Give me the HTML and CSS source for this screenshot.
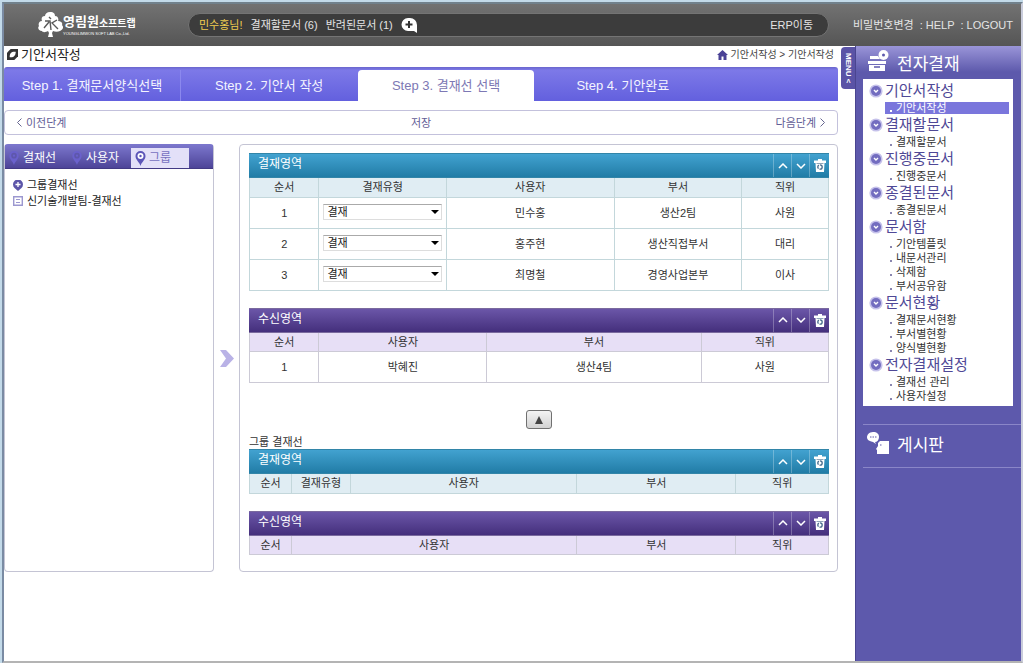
FILE: index.html
```html
<!DOCTYPE html>
<html lang="ko">
<head>
<meta charset="utf-8">
<title>기안서작성</title>
<link rel="stylesheet" href="styles.css">
</head>
<body>
<svg class="defs" aria-hidden="true">
  <symbol id="up" viewBox="0 0 10 6"><path d="M1 5l4-4 4 4" fill="none" stroke="#fff" stroke-width="1.5"/></symbol>
  <symbol id="down" viewBox="0 0 10 6"><path d="M1 1l4 4 4-4" fill="none" stroke="#fff" stroke-width="1.5"/></symbol>
  <symbol id="bin" viewBox="0 0 12 13"><path d="M4 0h4v1.500h4V4h-1.500L10 13H2L1.500 4H0V1.500h4z" fill="#fff"/><circle cx="6" cy="8" r="2.200" fill="none" stroke="#456a8c" stroke-width="1.300" stroke-dasharray="3.600 1"/><path d="M2.500 4.500h7" stroke="#456a8c" stroke-width=".6"/></symbol>
  <symbol id="bullet" viewBox="0 0 14 14"><circle cx="7" cy="7" r="6.600" fill="#c5c1ea"/><circle cx="7" cy="7" r="5" fill="#736dc0"/><path d="M5 6l2 2 2-2" fill="none" stroke="#fff" stroke-width="1.400"/></symbol>
  <symbol id="pin" viewBox="0 0 10 15"><path d="M5 15C4 11 0 9 0 5a5 5 0 0 1 10 0c0 4-4 6-5 10z" fill="currentColor"/><circle cx="5" cy="5" r="3" fill="var(--hole)"/><circle cx="5" cy="5" r="1.200" fill="currentColor"/></symbol>
</svg>
<div class="window">
  <header class="top">
    <a class="logo" href="#">
      <svg class="tree" viewBox="0 0 25 26" aria-hidden="true"><path d="M12 0c4 0 5 2 5 4 3 0 4 3 3 5 3 0 5 2 4 4 2 2 1 5-2 6-2 1-5 1-7 0l-1 2 1 4h-5l1-4-1-2c-2 1-5 2-6 0-3 0-5-3-3-5-1-2 0-5 3-5-1-3 0-5 3-5 0-2 2-4 5-4z" fill="#fff"/><path d="M11 5l2 2M7 9h5l1 9M11 10l-5 6M19 8l-5 3 6 6" fill="none" stroke="#5a5a5a" stroke-width="1.400"/></svg>
      <span class="brand"><span class="brand-name"><b class="brand-big">영림원</b><b class="brand-small">소프트랩</b></span><span class="brand-sub">YOUNGLIMWON SOFT LAB Co.,Ltd.</span></span>
    </a>
    <div class="status">
      <span class="user">민수홍님!</span>
      <a href="#">결재할문서 (6)</a>
      <a href="#">반려된문서 (1)</a>
      <button class="plain" type="button" aria-label="추가"><svg width="16" height="15" viewBox="0 0 16 15"><path d="M7 0h2a7 7 0 0 1 7 7v8l-3-2H7A6.500 6.500 0 0 1 7 0z" fill="#fff"/><path d="M8 3v7M4.500 6.500h7" stroke="#333" stroke-width="2"/></svg></button>
      <a class="erp" href="#">ERP이동</a>
    </div>
    <nav class="util"><a href="#">비밀번호변경</a><a href="#">: HELP</a><a href="#">: LOGOUT</a></nav>
  </header>
  <div class="body">
    <main class="main">
      <div class="title-row">
        <h1><svg width="11" height="11" viewBox="0 0 12 12" aria-hidden="true"><path d="M4 0h8v8l-4 4H0V4z" fill="#333"/><path d="M3 9C2.500 4.500 5 2.500 9.500 3 9.500 7 7.500 9.500 3 9z" fill="#fff"/></svg>기안서작성</h1>
        <p class="crumb"><svg width="11" height="10" viewBox="0 0 11 10" aria-hidden="true"><path d="M5.500 0L11 5H9.500v5h-3V6.500h-2V10h-3V5H0z" fill="#4a4296"/></svg>기안서작성 &gt; 기안서작성</p>
      </div>
      <nav class="steps">
        <a href="#">Step 1. 결재문서양식선택</a><a href="#">Step 2. 기안서 작성</a><a class="on" href="#">Step 3. 결재선 선택</a><a href="#">Step 4. 기안완료</a>
      </nav>
      <div class="pager">
        <button class="plain" type="button"><svg width="5" height="9" viewBox="0 0 5 9"><path d="M4.500.5l-4 4 4 4" fill="none" stroke="#666690"/></svg>이전단계</button>
        <button class="plain" type="button">저장</button>
        <button class="plain" type="button">다음단계<svg width="5" height="9" viewBox="0 0 5 9"><path d="M.5.5l4 4-4 4" fill="none" stroke="#666690"/></svg></button>
      </div>
      <div class="columns">
        <section class="tree-panel">
          <div class="tabs">
            <button class="tab" type="button"><svg width="10" height="14"><use href="#pin"/></svg>결재선</button>
            <button class="tab" type="button"><svg width="10" height="14"><use href="#pin"/></svg>사용자</button>
            <button class="tab on" type="button"><svg width="11" height="15"><use href="#pin"/></svg>그룹</button>
          </div>
          <ul class="tree-list">
            <li><svg width="10" height="11" viewBox="0 0 10 11"><path d="M5 11L1.500 8a5 5 0 1 1 7 0z" fill="#5c55a8"/><path d="M5 2v5M2.500 4.500h5" stroke="#fff" stroke-width="1.300"/></svg>그룹결재선</li>
            <li><svg width="10" height="10" viewBox="0 0 10 10"><path d="M.7.7h8.600v8.600H.7z" fill="#fff" stroke="#9c98d0" stroke-width="1.400"/><path d="M3 3.500h4M3 6.500h4" stroke="#9c98d0"/></svg>신기술개발팀-결재선</li>
          </ul>
        </section>
        <div class="move"><svg width="14" height="17" viewBox="0 0 14 17" aria-hidden="true"><path d="M0 0h6l8 8.500L6 17H0l6-8.500z" fill="#b9b2e6"/></svg></div>
        <section class="lines">
          <div class="box blue">
            <div class="bar"><h2>결재영역</h2><button type="button" aria-label="위로"><svg width="10" height="6"><use href="#up"/></svg></button><button type="button" aria-label="아래로"><svg width="10" height="6"><use href="#down"/></svg></button><button type="button" aria-label="삭제"><svg width="12" height="13"><use href="#bin"/></svg></button></div>
            <table>
              <colgroup><col class="w12"><col class="w22"><col class="w29"><col class="w22"><col class="w15"></colgroup>
              <thead><tr><th>순서</th><th>결재유형</th><th>사용자</th><th>부서</th><th>직위</th></tr></thead>
              <tbody>
                <tr><td>1</td><td><label class="pick"><select aria-label="결재유형 1"><option>결재</option></select><svg width="8" height="4" viewBox="0 0 8 4"><path d="M0 0h8L4 4z"/></svg></label></td><td>민수홍</td><td>생산2팀</td><td>사원</td></tr>
                <tr><td>2</td><td><label class="pick"><select aria-label="결재유형 2"><option>결재</option></select><svg width="8" height="4" viewBox="0 0 8 4"><path d="M0 0h8L4 4z"/></svg></label></td><td>홍주현</td><td>생산직접부서</td><td>대리</td></tr>
                <tr><td>3</td><td><label class="pick"><select aria-label="결재유형 3"><option>결재</option></select><svg width="8" height="4" viewBox="0 0 8 4"><path d="M0 0h8L4 4z"/></svg></label></td><td>최명철</td><td>경영사업본부</td><td>이사</td></tr>
              </tbody>
            </table>
          </div>
          <div class="box violet">
            <div class="bar"><h2>수신영역</h2><button type="button" aria-label="위로"><svg width="10" height="6"><use href="#up"/></svg></button><button type="button" aria-label="아래로"><svg width="10" height="6"><use href="#down"/></svg></button><button type="button" aria-label="삭제"><svg width="12" height="13"><use href="#bin"/></svg></button></div>
            <table>
              <colgroup><col class="w12"><col class="w29"><col class="w37"><col class="w22"></colgroup>
              <thead><tr><th>순서</th><th>사용자</th><th>부서</th><th>직위</th></tr></thead>
              <tbody><tr><td>1</td><td>박혜진</td><td>생산4팀</td><td>사원</td></tr></tbody>
            </table>
          </div>
          <button class="raise" type="button" aria-label="위로 적용"><svg width="8" height="8" viewBox="0 0 8 8"><path d="M4 0l4 8H0z" fill="#444"/></svg></button>
          <h3>그룹 결재선</h3>
          <div class="box blue">
            <div class="bar"><h2>결재영역</h2><button type="button" aria-label="위로"><svg width="10" height="6"><use href="#up"/></svg></button><button type="button" aria-label="아래로"><svg width="10" height="6"><use href="#down"/></svg></button><button type="button" aria-label="삭제"><svg width="12" height="13"><use href="#bin"/></svg></button></div>
            <table>
              <colgroup><col class="order"><col class="kind"><col><col class="dept"><col class="w16"></colgroup>
              <thead><tr><th>순서</th><th>결재유형</th><th>사용자</th><th>부서</th><th>직위</th></tr></thead>
            </table>
          </div>
          <div class="box violet">
            <div class="bar"><h2>수신영역</h2><button type="button" aria-label="위로"><svg width="10" height="6"><use href="#up"/></svg></button><button type="button" aria-label="아래로"><svg width="10" height="6"><use href="#down"/></svg></button><button type="button" aria-label="삭제"><svg width="12" height="13"><use href="#bin"/></svg></button></div>
            <table>
              <colgroup><col class="order"><col><col class="dept"><col class="w16"></colgroup>
              <thead><tr><th>순서</th><th>사용자</th><th>부서</th><th>직위</th></tr></thead>
            </table>
          </div>
        </section>
      </div>
    </main>
    <button class="menu-tab" type="button">MENU &lt;</button>
    <aside class="side">
      <h2 class="side-title"><svg width="21" height="22" viewBox="0 0 21 22" aria-hidden="true"><circle cx="15.500" cy="5" r="5" fill="#fff"/><circle cx="15.500" cy="5" r="1.500" fill="#5d59ac"/><path d="M2 6h8l2 3H2zM0 11h18v3H0zM1 15h16v6H1z" fill="#fff"/><path d="M6 17h6" stroke="#5d59ac" stroke-width="1.500"/></svg>전자결재</h2>
      <nav class="menu">
        <h3><svg width="14" height="14"><use href="#bullet"/></svg>기안서작성</h3>
        <ul><li class="on"><a href="#">기안서작성</a></li></ul>
        <h3><svg width="14" height="14"><use href="#bullet"/></svg>결재할문서</h3>
        <ul><li><a href="#">결재할문서</a></li></ul>
        <h3><svg width="14" height="14"><use href="#bullet"/></svg>진행중문서</h3>
        <ul><li><a href="#">진행중문서</a></li></ul>
        <h3><svg width="14" height="14"><use href="#bullet"/></svg>종결된문서</h3>
        <ul><li><a href="#">종결된문서</a></li></ul>
        <h3><svg width="14" height="14"><use href="#bullet"/></svg>문서함</h3>
        <ul><li><a href="#">기안템플릿</a></li><li><a href="#">내문서관리</a></li><li><a href="#">삭제함</a></li><li><a href="#">부서공유함</a></li></ul>
        <h3><svg width="14" height="14"><use href="#bullet"/></svg>문서현황</h3>
        <ul><li><a href="#">결재문서현황</a></li><li><a href="#">부서별현황</a></li><li><a href="#">양식별현황</a></li></ul>
        <h3><svg width="14" height="14"><use href="#bullet"/></svg>전자결재설정</h3>
        <ul><li><a href="#">결재선 관리</a></li><li><a href="#">사용자설정</a></li></ul>
      </nav>
      <h2 class="board"><svg width="23" height="23" viewBox="0 0 23 23" aria-hidden="true"><path d="M6 0c4 0 6 2 6 5s-2 5-4 5l1 2-3-2C1 9 0 7 0 5s2-5 6-5z" fill="#fff"/><path d="M3 5h1.500M5.500 5H7M8 5h1.500" stroke="#5d59ac"/><path d="M13 9h9v13H10v-4l-1-1 2-3v-3z" fill="#fff"/><path d="M13 13h1.500" stroke="#5d59ac"/></svg>게시판</h2>
    </aside>
  </div>
</div>
</body>
</html>
```
FILE: styles.css
```css
* { box-sizing: border-box; }
body, h1, h2, h3, p, ul { margin: 0; padding: 0; }
h1, h2, h3 { font-weight: 400; }
ul { list-style: none; }
body {
  font: 11px/14px "Liberation Sans", "Noto Sans CJK KR", sans-serif;
  color: #333;
  background: #c3dae9;
}
a { color: inherit; text-decoration: none; }
svg { flex: none; }
button { font: inherit; cursor: pointer; }
.plain { border: 0; padding: 0; background: none; color: inherit; display: flex; align-items: center; }
.defs { display: none; }
body { min-height: 100vh; padding: 2px 0 0 2px; display: flex; flex-direction: column; }
.window {
  flex: 1;
  display: flex;
  flex-direction: column;
  border-style: solid;
  border-width: 2px;
  border-color: #71818c #c9ccdb #b4b4b4 #7a8ba3;
  background: #fff;
}

.top {
  height: 42px;
  display: flex;
  align-items: center;
  color: #e4e4e4;
  background: linear-gradient(#727272, #555);
}
.logo { display: flex; align-items: center; gap: 0; width: 184px; padding-left: 34px; color: #fff; }
.tree { width: 25px; height: 26px; }
.brand { display: flex; flex-direction: column; }
.brand-name { display: flex; align-items: flex-end; }
.brand-big { font-size: 13px; line-height: 18px; }
.brand-small { font-size: 10px; line-height: 14px; }
.brand-sub { font-size: 4px; line-height: 6px; white-space: nowrap; }
.status {
  flex: 1;
  height: 24px;
  display: flex;
  align-items: center;
  gap: 8px;
  padding: 0 15px 0 10px;
  border: 1px solid #747474;
  border-radius: 12px;
  background: #3c3c3c;
}
.user { color: #f0cc50; }
.erp { margin-left: auto; }
.util { width: 192px; padding: 0 8px 0 24px; display: flex; justify-content: space-between; white-space: nowrap; }

.body { flex: 1; display: flex; }
.main { flex: 1; min-width: 0; padding-right: 3px; }
.title-row { height: 21px; padding: 0 4px 4px 3px; display: flex; align-items: center; justify-content: space-between; }
h1 { display: flex; align-items: center; gap: 3px; font-size: 13px; line-height: 16px; color: #222; }
.crumb { display: flex; align-items: center; gap: 3px; font-size: 10px; color: #444; }
.steps {
  display: flex;
  height: 34px;
  padding-top: 3px;
  border-radius: 3px 3px 0 0;
  background: linear-gradient(#6a66cc 0, #7d79e8 3px, #6360de);
}
.steps a {
  width: 21.2%;
  display: flex;
  align-items: center;
  justify-content: center;
  font-size: 13px;
  color: #f4f4ff;
  white-space: nowrap;
}
.steps a:first-child { border-right: 1px solid #8b88ee; }
.steps .on { color: #7d78b4; background: #fff; border-radius: 4px 4px 0 0; }
.pager {
  height: 25px;
  margin-top: 9px;
  padding: 0 12px;
  display: flex;
  align-items: center;
  justify-content: space-between;
  color: #625d96;
  border: 1px solid #c3c1dc;
  border-radius: 4px;
}
.pager button { gap: 4px; }

.columns { display: flex; margin-top: 9px; }
.tree-panel { width: 210px; border: 1px solid #c4c4d4; border-top-color: #7b76cc; border-radius: 4px; }
.tabs { display: flex; height: 24px; padding-top: 3px; background: linear-gradient(#7b76cc, #4d4498); border-bottom: 1px solid #423984; }
.tab {
  --hole: #5e57ac;
  width: 63px;
  display: flex;
  align-items: center;
  gap: 4px;
  padding: 0 0 0 4px;
  border: 0;
  background: none;
  color: #fff;
  font-size: 12px;
}
.tab svg { color: #6a61cc; }
.tab.on { --hole: #fff; width: 58px; gap: 3px; color: #7670c0; background: #e3e0f8; }
.tab.on svg { color: #5c55b8; }
.tree-list { padding: 8px 8px; line-height: 16px; color: #222; }
.tree-list li { display: flex; align-items: center; gap: 4px; }
.move { width: 25px; display: flex; align-items: center; justify-content: center; }
.lines { flex: 1; min-width: 0; padding: 8px 8px 16px 9px; border: 1px solid #c4c4d4; border-radius: 4px; display: flex; flex-direction: column; }
.box { margin-bottom: 17px; }
.box:last-child { margin-bottom: 0; }
.bar { display: flex; height: 25px; border: solid; border-width: 1px 0; color: #fff; }
.blue .bar { background: linear-gradient(#42a2d0, #217ca6); border-color: #3285a8 #17617f; }
.violet .bar { background: linear-gradient(#6b56a8, #442f7c); border-color: #7a6a9e #2d1d5c; }
.bar h2 { flex: 1; padding-left: 9px; font-size: 12px; line-height: 20px; }
.bar button { width: 18px; padding: 0; border: 0; border-left: 1px solid #ffffff44; background: none; display: flex; align-items: center; justify-content: center; }
.bar button:last-child { width: 20px; }
table { width: 100%; border-collapse: collapse; table-layout: fixed; }
th, td { padding: 0; text-align: center; font-weight: 400; border: 1px solid #c3d7db; }
th { height: 19px; border-top: 0; }
td { height: 31px; }
.blue th { background: #e0edf3; }
.violet th { background: #e7dff6; }
.violet th, .violet td { border-color: #cccad6; }
.order { width: 42px; } .kind { width: 59px; } .dept { width: 159px; }
.w12 { width: 12%; } .w15 { width: 15%; } .w16 { width: 16%; }
.w22 { width: 22%; } .w29 { width: 29%; } .w37 { width: 37%; }
.pick { display: grid; align-items: center; margin: 0 4px 2px; }
.pick select, .pick svg { grid-area: 1 / 1; }
.pick svg { justify-self: end; margin-right: 3px; pointer-events: none; }
select {
  appearance: none;
  width: 100%;
  height: 16px;
  padding: 0 3px;
  font: inherit;
  line-height: 14px;
  color: #222;
  background: #fff;
  border: 1px solid #ddd;
  border-top-color: #aaa;
  border-radius: 0;
}
.raise {
  align-self: center;
  width: 26px;
  height: 19px;
  margin: 10px 0 6px;
  padding: 0;
  display: flex;
  align-items: center;
  justify-content: center;
  border: 1px solid #707070;
  border-radius: 3px;
  background: linear-gradient(#f4f4f4, #d2d2d2);
}
.lines h3 { font-size: 11px; line-height: 14px; }

.menu-tab {
  width: 14px;
  height: 42px;
  margin-top: 1px;
  padding: 0;
  border: 0;
  border-radius: 4px 0 0 4px;
  writing-mode: vertical-rl;
  font-size: 8px;
  font-weight: 700;
  line-height: 14px;
  color: #fff;
  background: #5a53a6;
}
.side { width: 166px; border-left: 1px solid #4a4590; background: linear-gradient(#9a95d8, #5d59ac 26px); color: #fff; }
.side-title, .board { display: flex; align-items: center; gap: 8px; font-size: 17px; line-height: 24px; }
.side-title { height: 33px; padding: 4px 0 0 12px; }
.side-title svg { margin-bottom: 8px; }
.menu { margin: 0 8px 0 7px; padding: 2px 4px 3px 6px; background: #fff; color: #333; }
.menu h3 { display: flex; align-items: center; gap: 2px; font-size: 15px; line-height: 20px; color: #4f4896; }
.menu li { margin-left: 16px; padding: 1px 0; line-height: 12px; }
.menu a { display: block; padding-left: 5px; }
.menu a::before { content: ""; display: inline-block; width: 2px; height: 2px; margin-right: 4px; background: #8a86b0; }
.menu .on a { color: #fff; background: #7a76dc; }
.menu .on a::before { background: #fff; }
.board { height: 44px; margin: 18px 0 0 7px; padding-left: 4px; gap: 7px; border: solid #8a86c8; border-width: 1px 0; }
.board svg { margin-bottom: 6px; }
```
